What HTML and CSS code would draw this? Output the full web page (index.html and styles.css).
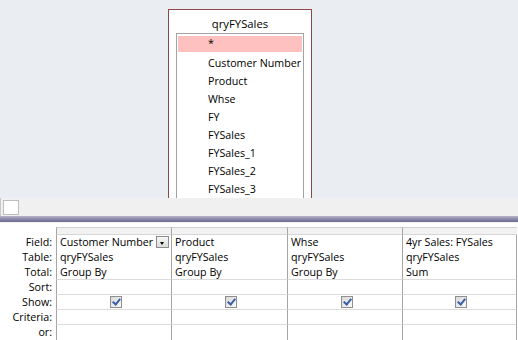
FILE: index.html
```html
<!DOCTYPE html>
<html lang="en">
<head>
  <meta charset="UTF-8">
  <title>Query Design</title>
  <link rel="stylesheet" href="styles.css">
</head>
<body>
  <div class="qd-tables">
    <div class="qd-fieldlist">
      <div class="qd-fl-title">qryFYSales</div>
      <div class="qd-fl-box">
        <span class="qd-fl-item qd-fl-star">*</span>
        <span class="qd-fl-item">Customer Number</span>
        <span class="qd-fl-item">Product</span>
        <span class="qd-fl-item">Whse</span>
        <span class="qd-fl-item">FY</span>
        <span class="qd-fl-item">FYSales</span>
        <span class="qd-fl-item">FYSales_1</span>
        <span class="qd-fl-item">FYSales_2</span>
        <span class="qd-fl-item">FYSales_3</span>
      </div>
    </div>
  </div>
  <div class="qd-scroll"><span class="qd-scroll-box"></span></div>
  <div class="qd-split"></div>
  <div class="qd-grid">
    <span class="qd-lbl qd-head-lbl"></span>
    <span class="qd-head"></span><span class="qd-head"></span><span class="qd-head"></span><span class="qd-head"></span>

    <span class="qd-lbl">Field:</span>
    <span class="qd-cell qd-cell-active">Customer Number<span class="qd-drop"></span></span>
    <span class="qd-cell">Product</span>
    <span class="qd-cell">Whse</span>
    <span class="qd-cell">4yr Sales: FYSales</span>

    <span class="qd-lbl">Table:</span>
    <span class="qd-cell">qryFYSales</span>
    <span class="qd-cell">qryFYSales</span>
    <span class="qd-cell">qryFYSales</span>
    <span class="qd-cell">qryFYSales</span>

    <span class="qd-lbl">Total:</span>
    <span class="qd-cell qd-lined">Group By</span>
    <span class="qd-cell qd-lined">Group By</span>
    <span class="qd-cell qd-lined">Group By</span>
    <span class="qd-cell qd-lined">Sum</span>

    <span class="qd-lbl">Sort:</span>
    <span class="qd-cell qd-lined"></span>
    <span class="qd-cell qd-lined"></span>
    <span class="qd-cell qd-lined"></span>
    <span class="qd-cell qd-lined"></span>

    <span class="qd-lbl">Show:</span>
    <span class="qd-cell qd-lined qd-center"><span class="qd-check"></span></span>
    <span class="qd-cell qd-lined qd-center"><span class="qd-check"></span></span>
    <span class="qd-cell qd-lined qd-center"><span class="qd-check"></span></span>
    <span class="qd-cell qd-lined qd-center"><span class="qd-check"></span></span>

    <span class="qd-lbl">Criteria:</span>
    <span class="qd-cell qd-lined"></span>
    <span class="qd-cell qd-lined"></span>
    <span class="qd-cell qd-lined"></span>
    <span class="qd-cell qd-lined"></span>

    <span class="qd-lbl">or:</span>
    <span class="qd-cell"></span>
    <span class="qd-cell"></span>
    <span class="qd-cell"></span>
    <span class="qd-cell"></span>
  </div>
</body>
</html>
```

FILE: styles.css
```css
html, body {
  margin: 0;
  padding: 0;
  background: #fff;
  font-family: "Open Sans", "Noto Sans", sans-serif;
  font-size: 10.7px;
  color: #000;
  overflow: hidden;
}
.qd-tables {
  height: 198px;
  background: #eaedf1;
  overflow: hidden;
  padding: 9px 0 0 168px;
  box-sizing: border-box;
}
.qd-fieldlist {
  width: 144px;
  height: 200px;
  box-sizing: border-box;
  border: 1px solid #8e4646;
  background: #fff;
  padding: 0 7px;
}
.qd-fl-title {
  text-align: center;
  height: 23px;
  line-height: 27px;
  font-size: 11.3px;
}
.qd-fl-box {
  border: 1px solid #a3a3a3;
  border-bottom: 0;
  height: 200px;
  padding: 2px 1px 0;
}
.qd-fl-item {
  display: block;
  height: 18px;
  line-height: 18px;
  padding-left: 30px;
  white-space: nowrap;
}
.qd-fl-star {
  background: #ffc0c0;
  height: 16px;
  line-height: 15px;
  margin-bottom: 2px;
}
.qd-scroll {
  height: 18px;
  background: #f0f0f0;
  display: flex;
  align-items: center;
  border-left: 1px solid #c8c8c8;
}
.qd-scroll-box {
  width: 16px;
  height: 15px;
  margin-left: 2px;
  background: #fff;
  border: 1px solid #bdbdbd;
  box-sizing: border-box;
}
.qd-split {
  height: 6px;
  background: linear-gradient(#b7b6cc, #8a88a8 50%, #6f6d8f);
  border-bottom: 1px solid #f2f2f2;
}
.qd-grid {
  margin-top: 4px;
  display: grid;
  grid-template-columns: 56px 115px 116px 115px 115px;
  grid-template-rows: 8px repeat(7, 15px);
}
.qd-lbl {
  text-align: right;
  padding-right: 4px;
  line-height: 15px;
  white-space: nowrap;
}
.qd-head {
  background: #f2f2f2;
  border-top: 1px solid #d0d0d0;
  border-left: 1px solid #a5a5a5;
  border-bottom: 1px solid #d6d6d6;
}
.qd-head:last-child,
.qd-cell:nth-child(5n) {
  border-right: 1px solid #a5a5a5;
}
.qd-cell {
  border-left: 1px solid #a5a5a5;
  line-height: 15px;
  padding-left: 3px;
  white-space: nowrap;
  position: relative;
  box-sizing: border-box;
}
.qd-lined {
  border-bottom: 1px solid #dcdcdc;
}
.qd-center {
  display: flex;
  justify-content: center;
  align-items: center;
}
.qd-drop {
  position: absolute;
  right: 2px;
  top: 1px;
  width: 13px;
  height: 12px;
  box-sizing: border-box;
  border: 1px solid #8c8c8c;
  background: linear-gradient(#f6f6f6, #dcdcdc);
}
.qd-drop::after {
  content: '';
  position: absolute;
  left: 3px;
  top: 5px;
  border-left: 2.5px solid transparent;
  border-right: 2.5px solid transparent;
  border-top: 3px solid #000;
}
.qd-check {
  width: 12px;
  height: 12px;
  box-sizing: border-box;
  border: 1px solid #8e8f8f;
  background: linear-gradient(135deg, #d8d8d8, #fbfbfb);
  position: relative;
}
.qd-check::after {
  content: '';
  position: absolute;
  left: 3px;
  top: 0px;
  width: 3px;
  height: 6px;
  border: solid #3b5ea8;
  border-width: 0 2px 2px 0;
  transform: rotate(40deg);
}
```
